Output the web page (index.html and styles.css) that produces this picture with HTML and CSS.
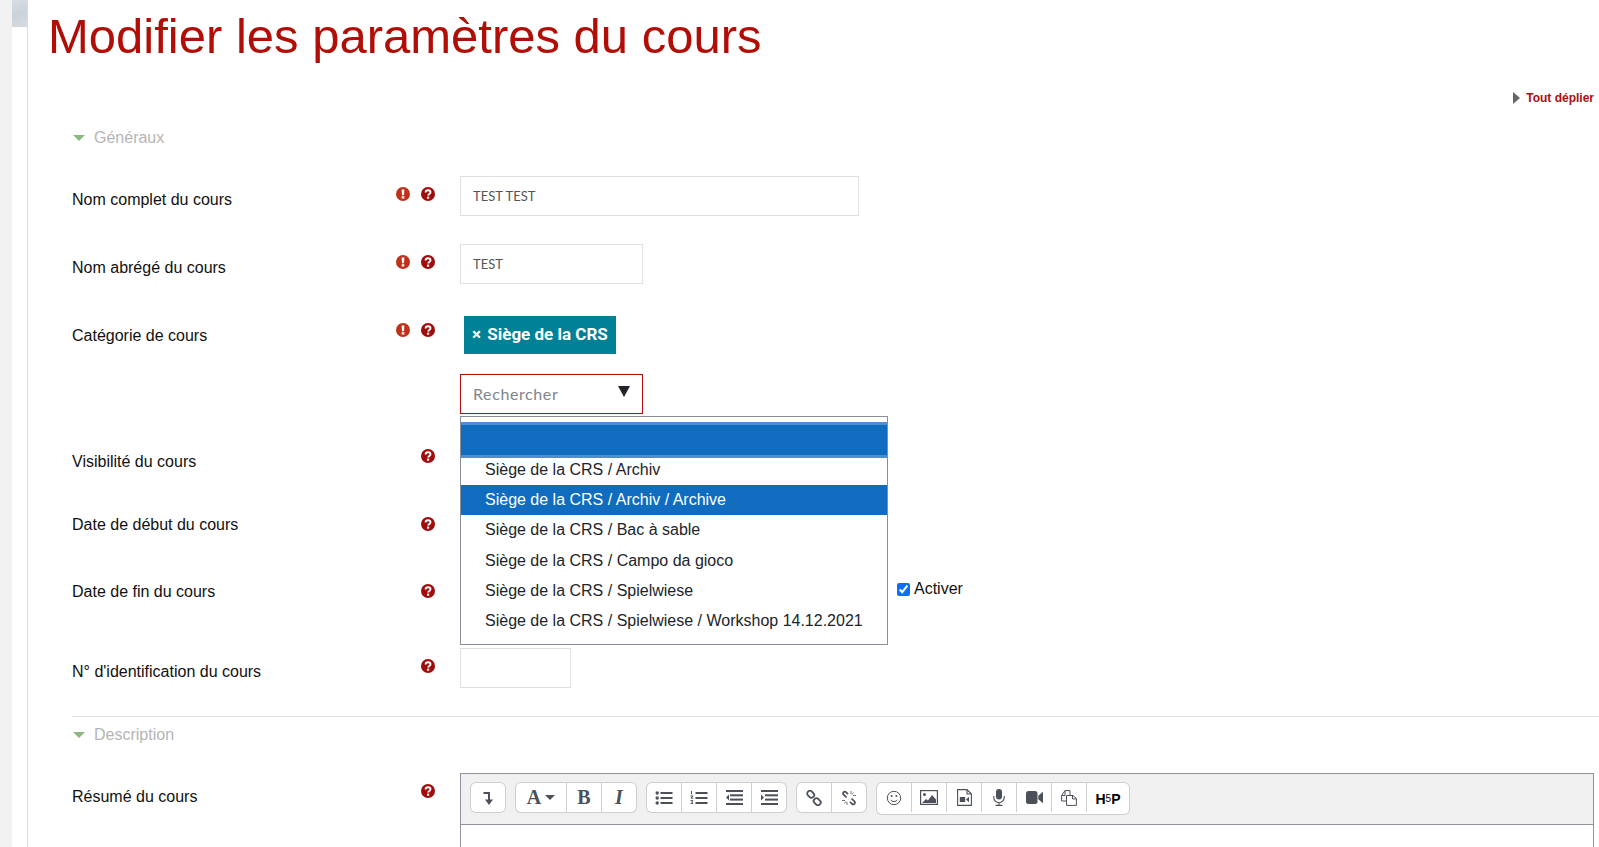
FILE: index.html
```html
<!DOCTYPE html>
<html lang="fr">
<head>
    <meta charset="UTF-8">
    <meta name="viewport" content="width=device-width, initial-scale=1.0">
    <title>Modifier les paramètres du cours</title>
    <link rel="stylesheet" href="styles.css">
</head>
<body>
    <svg class="defs" width="0" height="0">
        <symbol id="icon-required" viewBox="0 0 14 14">
            <circle cx="7" cy="7" r="7"></circle>
            <path d="M5.6 2.6h2.8l-.4 5.6H6z M5.7 9.3h2.6v2.3H5.7z" fill="#fff"></path>
        </symbol>
        <symbol id="icon-help" viewBox="0 0 14 14">
            <circle cx="7" cy="7" r="7"></circle>
            <path d="M4.6 5.4c0-1.5 1.1-2.2 2.5-2.2s2.4.8 2.4 2c0 1.8-2.2 1.8-2.2 3.3" fill="none" stroke="#fff" stroke-width="1.9"></path>
            <rect x="6" y="9.6" width="2.2" height="2.1" fill="#fff"></rect>
        </symbol>
    </svg>

    <div class="gutter"></div>
    <div class="side-panel"><div class="side-thumb"></div></div>

    <main class="content">
        <h1>Modifier les paramètres du cours</h1>
        <div class="expand-all"><span class="arrow-right"></span><a href="#">Tout déplier</a></div>

        <form class="course-form">
            <div class="legend legend-general"><span class="arrow-down"></span>Généraux</div>

            <div class="row row-fullname">
                <label class="row-label">Nom complet du cours</label>
                <div class="row-icons">
                    <svg class="icon-required"><use href="#icon-required"></use></svg>
                    <svg class="icon-help"><use href="#icon-help"></use></svg>
                </div>
                <div class="row-field"><input class="text-input input-long" type="text" value="TEST TEST"></div>
            </div>

            <div class="row row-shortname">
                <label class="row-label">Nom abrégé du cours</label>
                <div class="row-icons">
                    <svg class="icon-required"><use href="#icon-required"></use></svg>
                    <svg class="icon-help"><use href="#icon-help"></use></svg>
                </div>
                <div class="row-field"><input class="text-input input-short" type="text" value="TEST"></div>
            </div>

            <div class="row row-category">
                <label class="row-label">Catégorie de cours</label>
                <div class="row-icons">
                    <svg class="icon-required"><use href="#icon-required"></use></svg>
                    <svg class="icon-help"><use href="#icon-help"></use></svg>
                </div>
                <div class="row-field">
                    <span class="tag"><span class="tag-x">×</span> Siège de la CRS</span>
                    <div class="search-box">
                        <input class="search-input" type="text" placeholder="Rechercher">
                        <span class="search-caret"></span>
                    </div>
                    <div class="dropdown">
                        <div class="dropdown-blank"></div>
                        <div class="dropdown-item">Siège de la CRS / Archiv</div>
                        <div class="dropdown-item active">Siège de la CRS / Archiv / Archive</div>
                        <div class="dropdown-item">Siège de la CRS / Bac à sable</div>
                        <div class="dropdown-item">Siège de la CRS / Campo da gioco</div>
                        <div class="dropdown-item">Siège de la CRS / Spielwiese</div>
                        <div class="dropdown-item">Siège de la CRS / Spielwiese / Workshop 14.12.2021</div>
                    </div>
                </div>
            </div>

            <div class="row row-visible">
                <label class="row-label">Visibilité du cours</label>
                <div class="row-icons"><svg class="icon-help"><use href="#icon-help"></use></svg></div>
            </div>

            <div class="row row-date row-startdate">
                <label class="row-label">Date de début du cours</label>
                <div class="row-icons"><svg class="icon-help"><use href="#icon-help"></use></svg></div>
            </div>

            <div class="row row-date row-enddate">
                <label class="row-label">Date de fin du cours</label>
                <div class="row-icons"><svg class="icon-help"><use href="#icon-help"></use></svg></div>
                <div class="row-field">
                    <label class="enable-check"><input type="checkbox" checked> Activer</label>
                </div>
            </div>

            <div class="row row-idnumber">
                <label class="row-label">N° d'identification du cours</label>
                <div class="row-icons"><svg class="icon-help"><use href="#icon-help"></use></svg></div>
                <div class="row-field"><input class="text-input input-id" type="text"></div>
            </div>

            <div class="legend legend-description"><span class="arrow-down"></span>Description</div>

            <div class="row row-summary">
                <label class="row-label">Résumé du cours</label>
                <div class="row-icons"><svg class="icon-help"><use href="#icon-help"></use></svg></div>
                <div class="row-field">
                    <div class="editor">
                        <div class="toolbar">
                            <div class="tool-group">
                                <button type="button" class="tool">
                                    <svg width="16" height="16" viewBox="0 0 16 16"><path d="M3.500 3h5.500v8" fill="none" stroke-width="2"></path><path d="M5 9.500h8L9 15z" class="solid"></path></svg>
                                </button>
                            </div>
                            <div class="tool-group">
                                <button type="button" class="tool tool-font"><span class="serif-letter">A</span><span class="font-caret"></span></button>
                                <button type="button" class="tool"><span class="serif-letter">B</span></button>
                                <button type="button" class="tool"><span class="serif-letter italic">I</span></button>
                            </div>
                            <div class="tool-group">
                                <button type="button" class="tool">
                                    <svg width="18" height="16" viewBox="0 0 18 16"><circle cx="2.200" cy="3" r="1.700" class="solid"></circle><circle cx="2.200" cy="8" r="1.700" class="solid"></circle><circle cx="2.200" cy="13" r="1.700" class="solid"></circle><rect x="5.500" y="2" width="12" height="2" class="solid"></rect><rect x="5.500" y="7" width="12" height="2" class="solid"></rect><rect x="5.500" y="12" width="12" height="2" class="solid"></rect></svg>
                                </button>
                                <button type="button" class="tool">
                                    <svg width="18" height="16" viewBox="0 0 18 16"><path d="M1.500 1v3.400M.5 6h2.600l-2.200 2.200h2.400M.5 10.600h2.400l-1 1.300 1 1.500H.5" fill="none" stroke-width="1"></path><rect x="5.500" y="2" width="12" height="2" class="solid"></rect><rect x="5.500" y="7" width="12" height="2" class="solid"></rect><rect x="5.500" y="12" width="12" height="2" class="solid"></rect></svg>
                                </button>
                                <button type="button" class="tool">
                                    <svg width="17" height="15" viewBox="0 0 17 15"><rect y="0" width="17" height="2" class="solid"></rect><rect x="4" y="4.300" width="13" height="2" class="solid"></rect><rect x="4" y="8.600" width="13" height="2" class="solid"></rect><rect y="13" width="17" height="2" class="solid"></rect><path d="M3 4.500v6L0 7.500z" class="solid"></path></svg>
                                </button>
                                <button type="button" class="tool">
                                    <svg width="17" height="15" viewBox="0 0 17 15"><rect y="0" width="17" height="2" class="solid"></rect><rect x="4" y="4.300" width="13" height="2" class="solid"></rect><rect x="4" y="8.600" width="13" height="2" class="solid"></rect><rect y="13" width="17" height="2" class="solid"></rect><path d="M0 4.500v6l3-3z" class="solid"></path></svg>
                                </button>
                            </div>
                            <div class="tool-group">
                                <button type="button" class="tool">
                                    <svg width="16" height="16" viewBox="0 0 16 16"><rect x="1" y="1.500" width="7.500" height="5.500" rx="2.700" transform="rotate(45 4.700 4.200)" fill="none" stroke-width="1.800"></rect><rect x="7.500" y="9" width="7.500" height="5.500" rx="2.700" transform="rotate(45 11.200 11.700)" fill="none" stroke-width="1.800"></rect></svg>
                                </button>
                                <button type="button" class="tool">
                                    <svg width="16" height="16" viewBox="0 0 16 16"><path d="M5.500 7.500 2.600 4.600a1.700 1.700 0 0 1 0-2.400 1.700 1.700 0 0 1 2.400 0l2 2" fill="none" stroke-width="1.700"></path><path d="M10.500 8.500l2.900 2.900a1.700 1.700 0 0 1 0 2.400 1.700 1.700 0 0 1-2.400 0l-2-2" fill="none" stroke-width="1.700"></path><path d="M10 1v3M12.500 2.500 11 4.500M15 5.500h-3M1 10.500h3M3.500 13.500 5 11.500M6 15v-3" fill="none" stroke-width=".8"></path></svg>
                                </button>
                            </div>
                            <div class="tool-group">
                                <button type="button" class="tool">
                                    <svg width="16" height="16" viewBox="0 0 16 16"><circle cx="8" cy="8" r="6.700" fill="none" stroke-width="1"></circle><circle cx="5.600" cy="6" r="1" class="solid"></circle><circle cx="10.400" cy="6" r="1" class="solid"></circle><path d="M4.500 9.800c1.600 2.300 5.400 2.300 7 0" fill="none" stroke-width="1"></path></svg>
                                </button>
                                <button type="button" class="tool">
                                    <svg width="18" height="15" viewBox="0 0 18 15"><rect x=".6" y=".6" width="16.800" height="13.800" fill="none" stroke-width="1.200"></rect><circle cx="4.500" cy="4.500" r="1.500" class="solid"></circle><path d="M2 13l4-4 2 1.500L12 5l4 4.500V13z" class="solid"></path></svg>
                                </button>
                                <button type="button" class="tool">
                                    <svg width="15" height="17" viewBox="0 0 15 17"><path d="M.6.6h9.400l4.400 4.400v11.400H.6zM10 .6V5h4.400" fill="none" stroke-width="1.100"></path><rect x="2.800" y="8" width="5.400" height="5" class="solid"></rect><path d="M12 7.800v5.400L9 10.500z" class="solid"></path></svg>
                                </button>
                                <button type="button" class="tool">
                                    <svg width="12" height="17" viewBox="0 0 12 17"><rect x="3" y="0" width="6" height="10.500" rx="3" class="solid"></rect><path d="M.8 7v1.500a5.200 5.200 0 0 0 10.400 0V7M6 13.500v2.500M2.500 16.400h7" fill="none" stroke-width="1.100"></path></svg>
                                </button>
                                <button type="button" class="tool">
                                    <svg width="17" height="13" viewBox="0 0 17 13"><rect y="0" width="11.500" height="13" rx="2.500" class="solid"></rect><path d="M12.300 4.700 17 .8v11.400l-4.700-3.900z" class="solid"></path></svg>
                                </button>
                                <button type="button" class="tool">
                                    <svg width="16" height="16" viewBox="0 0 16 16"><path d="M5 11H.6V5.500L4 .6h5v4.600M.6 5.500H4V.6" fill="none" stroke-width="1"></path><path d="M5.500 5.500h6.500L15.400 8.600V15.400H5.500z" fill="#fff" stroke-width="1"></path><path d="M11.500 5.500v3.400h3.800" fill="none" stroke-width="1"></path></svg>
                                </button>
                                <button type="button" class="tool tool-h5p">H<span class="h5p-five">5</span>P</button>
                            </div>
                        </div>
                        <div class="editor-body"></div>
                    </div>
                </div>
            </div>
        </form>
    </main>
</body>
</html>
```

FILE: styles.css
```css
* {
    box-sizing: border-box;
}

html, body {
    height: 847px;
    overflow: hidden;
}

body {
    display: flex;
    margin: 0;
    font-family: "Liberation Sans", Arial, sans-serif;
    font-size: 16px;
    color: #111;
    background-color: #fff;
}

.defs {
    position: absolute;
}

.gutter {
    width: 12px;
    background-color: #f2f2f2;
}

.side-panel {
    width: 15px;
    background-color: #fff;
}

.side-thumb {
    height: 27px;
    background: linear-gradient(160deg, #d6dce2, #cbd3da 50%, #d4dae0);
}

.content {
    flex: 1;
    min-width: 0;
    border-left: 1px solid #dcdcdc;
}

h1 {
    margin: 0;
    padding-left: 20px;
    height: 72px;
    line-height: 72px;
    font-size: 49px;
    font-weight: normal;
    color: #b00e07;
}

.expand-all {
    display: flex;
    align-items: center;
    justify-content: flex-end;
    gap: 6px;
    height: 16px;
    margin-top: 18px;
    padding-right: 5px;
    font-size: 12px;
    font-weight: bold;
}

.expand-all a {
    color: #a80f0f;
    text-decoration: none;
}

.arrow-right {
    border-style: solid;
    border-width: 6px 0 6px 7px;
    border-color: transparent transparent transparent #666;
}

.course-form {
    padding-left: 44px;
}

.legend {
    display: flex;
    align-items: center;
    gap: 9px;
    height: 20px;
    padding-left: 1px;
    color: #b5b5b5;
}

.legend-general {
    margin-top: 22px;
    margin-bottom: 28px;
}

.legend-description {
    border-top: 1px solid #dfe1e6;
    height: 36px;
    margin-bottom: 21px;
}

.arrow-down {
    border-style: solid;
    border-width: 6px 6.5px 0 6.5px;
    border-color: #8ab87d transparent transparent transparent;
}

.row {
    display: flex;
    align-items: flex-start;
    min-height: 40px;
}

.row-fullname { margin-bottom: 28px; }
.row-shortname { margin-bottom: 32px; }
.row-category { margin-bottom: 24px; }
.row-visible { margin-bottom: 23px; }
.row-startdate { margin-bottom: 27px; }
.row-enddate { margin-bottom: 40px; }
.row-idnumber { margin-bottom: 28px; }

.row-label {
    width: 324px;
    padding-top: 15px;
    line-height: 18px;
    flex-shrink: 0;
}

.row-category .row-label { padding-top: 11px; }

.row-icons {
    display: flex;
    justify-content: flex-end;
    gap: 11px;
    width: 64px;
    margin-top: 11px;
    padding-right: 25px;
    flex-shrink: 0;
}

.row-category .row-icons { margin-top: 7px; }
.row-date .row-icons { margin-top: 16px; }

.row-icons svg {
    width: 14px;
    height: 14px;
}

.icon-required { fill: #c1301a; }
.icon-help { fill: #a00c0c; }

.row-field {
    position: relative;
    flex: 1;
    min-width: 0;
}

.text-input {
    display: block;
    height: 40px;
    padding: 0 12px 1px;
    border: 1px solid #e0e0e0;
    outline: none;
    font-family: Lato, sans-serif;
    font-size: 13px;
    color: #555;
}

.input-long { width: 399px; }
.input-short { width: 183px; }
.input-id { width: 111px; }

.tag {
    display: inline-block;
    height: 38px;
    margin-left: 4px;
    margin-bottom: 20px;
    padding: 0 8px;
    line-height: 37px;
    font-family: Roboto, sans-serif;
    font-size: 17px;
    font-weight: bold;
    color: #fff;
    background-color: #008196;
    vertical-align: top;
}

.tag-x {
    margin-right: 2px;
}

.search-box {
    display: flex;
    align-items: flex-start;
    width: 183px;
    height: 40px;
    border: 1px solid #b20f0f;
    box-shadow: 0 0 3px rgba(120, 200, 100, 0.25);
}

.search-input {
    width: 150px;
    height: 38px;
    padding: 0 12px 2px;
    border: none;
    outline: none;
    font-family: Lato, sans-serif;
    font-size: 16px;
    letter-spacing: 0.6px;
}

.search-input::placeholder {
    color: #80868b;
}

.search-caret {
    margin-top: 11px;
    margin-left: 7px;
    border-style: solid;
    border-width: 11px 6px 0 6px;
    border-color: #212529 transparent transparent transparent;
}

/* ouvert par-dessus les lignes suivantes */
.dropdown {
    position: absolute;
    left: 0;
    top: 100px;
    width: 428px;
    height: 229px;
    padding-top: 5px;
    border: 1px solid #8a8e99;
    background-color: #fff;
    color: #212529;
}

.dropdown-blank {
    height: 36px;
    border-top: 3px solid #4a90d0;
    border-bottom: 3px solid #4a90d0;
    background-color: #106cbf;
}

.dropdown-item {
    height: 30px;
    padding-left: 24px;
    line-height: 30px;
    white-space: nowrap;
}

.dropdown-blank + .dropdown-item {
    height: 27px;
    line-height: 24px;
}

.dropdown-item:nth-child(n+5) {
    line-height: 32px;
}

.dropdown-item.active {
    color: #fff;
    background-color: #106cbf;
}

.enable-check {
    display: flex;
    align-items: center;
    gap: 4px;
    margin-left: 437px;
    margin-top: 11px;
    line-height: 20px;
}

.enable-check input {
    width: 13px;
    height: 13px;
    margin: 0;
    accent-color: #0d6efd;
}

.editor {
    height: 90px;
    margin-right: 5px;
    border: 1px solid #90949c;
    border-bottom: none;
}

.toolbar {
    display: flex;
    align-items: flex-start;
    gap: 11px;
    height: 51px;
    padding: 9px 10px 0;
    border-bottom: 1px solid #90949c;
    background-color: #f0f0f0;
}

.tool-group {
    display: flex;
    border-radius: 5px;
    box-shadow: 0 0 0 1px #cfcfcf;
    background-color: #fff;
}

.tool {
    display: flex;
    align-items: center;
    justify-content: center;
    width: 35px;
    height: 29px;
    padding: 0;
    border: none;
    border-right: 1px solid #cfcfcf;
    background: none;
    color: #4c5059;
    stroke: #4c5059;
}

.tool:last-child {
    width: 34px;
    border-right: none;
}

.tool .solid {
    fill: #4c5059;
    stroke: none;
}

.serif-letter {
    font-family: "Liberation Serif", serif;
    font-size: 20px;
    font-weight: bold;
    stroke: none;
}

.serif-letter.italic {
    font-style: italic;
}

.tool-font {
    width: 51px;
    gap: 4px;
}

.font-caret {
    border-style: solid;
    border-width: 5px 5px 0 5px;
    border-color: #4c5059 transparent transparent transparent;
}

.tool.tool-h5p {
    width: 42px;
    height: 31px;
    font-size: 14px;
    font-weight: bold;
    color: #000;
}

.h5p-five {
    font-size: 10px;
    font-weight: normal;
}

.editor-body {
    height: 38px;
    background-color: #fff;
}
```
